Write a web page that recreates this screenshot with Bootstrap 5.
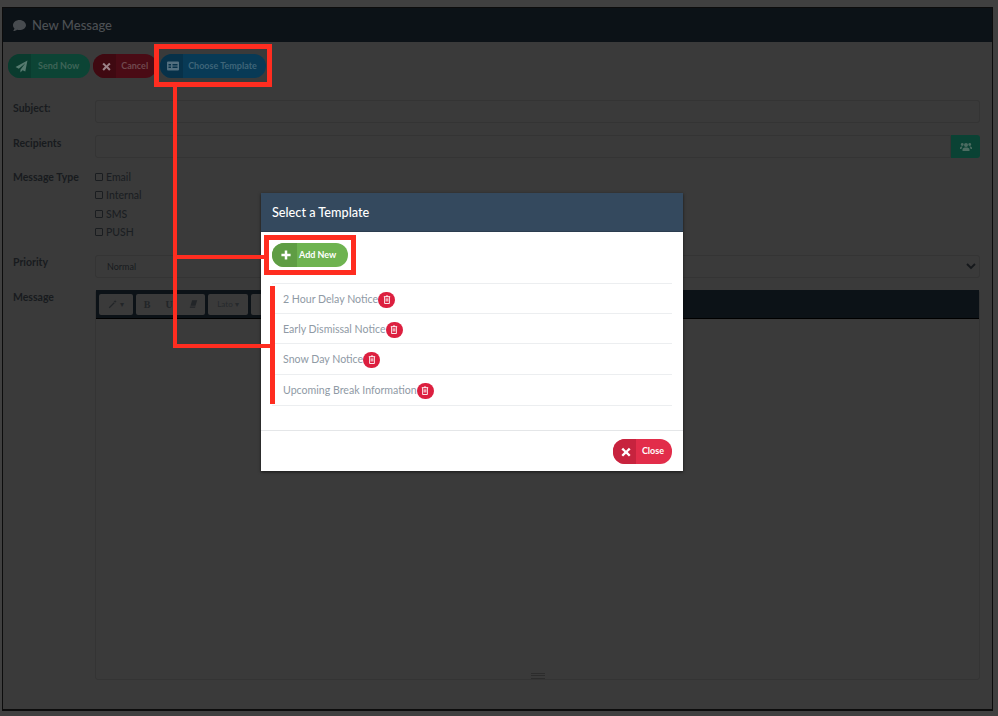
<!DOCTYPE html>
<html lang="en">
<head>
<meta charset="utf-8">
<title>New Message</title>
<link href="https://cdn.jsdelivr.net/npm/bootstrap@5.3.0/dist/css/bootstrap.min.css" rel="stylesheet">
<style>
html,body{height:716px;overflow:hidden}
body{background:#404040;font-family:Lato,"Liberation Sans",sans-serif;color:#1d2125;position:relative;font-size:11px}
.shell{margin:7px 5px 5px 2px;height:704px;background:#3a3a3a;border:1px solid #0c0c0c;border-width:1px 1px 2px 1px;display:flex;flex-direction:column}
.shell-head{height:34px;background:#0c1217;color:#4c5054;font-size:13px;font-weight:500;padding:1px 0 0 10px;gap:6px;flex:none}
.shell-head svg{width:13px;height:13px;fill:#474b4f}
.shell-body{padding:12px 12px 0 5px;flex:1;display:flex;flex-direction:column;min-height:0}
.lbtn{display:inline-flex;align-items:stretch;height:24px;border-radius:12px;overflow:hidden;font-size:9px;font-weight:700;line-height:24px}
.lbtn .ic{width:23px;display:flex;align-items:center;justify-content:center;padding-left:3px}
.lbtn .tx{padding:0 9px 0 5px}
.lbtn svg{width:9px;height:9px;fill:currentColor}
.b-send{background:#0c4435;color:#3f6458}.b-send .ic{background:#0a3b2e;color:#557a6f}
.b-send .ic svg{width:13px;height:13px}
.b-send .tx{padding:0 11px 0 7px}
.b-cancel{background:#4a0b15;color:#70494f}.b-cancel .ic{background:#3f0911;color:#9c8288}
.b-cancel .tx{padding:0 9px 0 5px}
.b-choose{background:#083a56;color:#3f6579}.b-choose .ic{background:#073149;color:#536f7f}
.toprow{gap:3px;margin-bottom:22px}
.frow{display:flex;align-items:flex-start;padding-left:5px}
.flabel{width:82px;font-weight:700;font-size:10.5px;color:#181b1e;flex:none;line-height:14px}
.fbox{height:23px;flex:1;border:1px solid #343434;background:#3a3a3a;border-radius:3px}
.r1{margin-bottom:12px}
.recip{flex:1;display:flex;height:23px}
.recip .fbox{border-radius:3px 0 0 3px}
.gbtn{width:29px;background:#0a4234;color:#4c6c61;display:flex;align-items:center;justify-content:center;border-radius:0 3px 3px 0}
.gbtn svg{width:12px;height:10px;fill:currentColor}
.checks{line-height:18.3px;font-size:10.5px;color:#1a1e22;font-weight:500;margin-bottom:14px}
.checks div{display:flex;align-items:center;gap:3px}
.cb{width:8px;height:8px;border:1px solid #1a1d20;border-radius:1px;display:inline-block}
.selbox{position:relative;padding-left:11px;line-height:21px;font-size:9px;color:#181b1e}
.selbox svg{position:absolute;right:3px;top:7px;width:10px;height:7px}
.editor{flex:1;height:390px;border:1px solid #343434;border-radius:3px;position:relative}
.etools{height:29px;margin-top:-1px;background:#0c1217;border-bottom:1px solid #000;display:flex;align-items:center;gap:3px;padding:0 3px}
.tb{height:21px;background:#3a3a3a;border-radius:2px;display:flex;align-items:center;justify-content:center;color:#222528;font-size:8px}
.tb svg{width:10px;height:10px;fill:currentColor}
.tb span{width:22px;text-align:center;font-weight:700;font-family:"Liberation Serif",serif;font-size:10px}
.tb .er{width:25px;display:flex;justify-content:center}
.grip{position:absolute;left:435px;bottom:0;width:14px;height:6px;border-top:1px solid #2c2c2c;border-bottom:1px solid #2c2c2c}
.grip::after{content:"";display:block;border-top:1px solid #2c2c2c;margin-top:1px}
.dlg{position:absolute;left:261px;top:193px;width:422px;height:278px;background:#fff;border:0;border-radius:0;overflow:hidden;box-shadow:0 1px 3px rgba(0,0,0,.6)}
.dlg-head{background:#34495e;color:#fff;height:39px;padding:1px 11px 0;font-size:12.700px;font-weight:500;border:0;border-radius:0;border-bottom:1px solid #2b3d4f;justify-content:flex-start}
.dlg-body{padding:11px 11px 0;height:198px;flex:none}
.b-add{background:#6eb350;color:#fff}.b-add .ic{background:#5f9d44;width:25px}
.b-add .ic svg,.b-close .ic svg{width:10px;height:10px}
.b-add .tx{padding:0 12px 0 2px}
.tlist{margin-top:16px;border-top:1px solid #eceef0;border-bottom:1px solid #eceef0}
.tlist .list-group-item{padding:2px 0 0 11px;height:30.200px;display:flex;align-items:center;font-size:10.600px;color:#8f9aa5;border-color:#eceef0;background:transparent}
.trash{width:17px;height:16px;border-radius:8px;background:#dc1f3f;color:#fff;display:inline-flex;align-items:center;justify-content:center}
.trash svg{width:8px;height:9px;fill:none;stroke:#fff;stroke-width:1.100}
.dlg-foot{height:41px;border-top:1px solid #e4e6e8;padding:8px 11px;justify-content:flex-end;display:flex;align-items:flex-start}
.b-close{background:#e22d4a;color:#fff;height:25px;line-height:24px}.b-close .ic{background:#c7233e;width:23px}
.b-close .tx{padding:0 8px 0 6px}
.mk{position:absolute;background:#ff2d20}
.mkbox{position:absolute;border:5px solid #ff2d20;background:transparent}
</style>
</head>
<body>
<div class="shell">
  <div class="shell-head d-flex align-items-center">
    <svg viewBox="0 0 24 24"><path d="M12 2C5.400 2 0 6.200 0 11.500c0 2.300 1 4.400 2.700 6C2.100 19.500.8 21 .4 22c4 0 5.900-1.300 7-2.300 1.400.5 3 .8 4.600.8 6.600 0 12-4.200 12-9S18.600 2 12 2z"/></svg>
    <span>New Message</span>
  </div>
  <div class="shell-body">
    <div class="d-flex toprow">
      <div class="lbtn b-send"><span class="ic"><svg viewBox="0 0 24 24"><path d="M23 1 1 13l6 3L19 6 10 18v5l4-4 5 2z"/></svg></span><span class="tx">Send Now</span></div>
      <div class="lbtn b-cancel"><span class="ic"><svg viewBox="0 0 24 24"><path d="M5 2 12 9l7-7 4 4-7 6 7 7-4 4-7-7-7 7-4-4 7-7-7-6z"/></svg></span><span class="tx">Cancel</span></div>
      <div class="lbtn b-choose"><span class="ic"><svg viewBox="0 0 24 24" style="width:14px;height:12px"><path d="M2 3h20a2 2 0 0 1 2 2v14a2 2 0 0 1-2 2H2a2 2 0 0 1-2-2V5a2 2 0 0 1 2-2zm1 5v3h5V8zm8 0v3h10V8zM3 13v3h5v-3zm8 0v3h10v-3z" fill-rule="evenodd"/></svg></span><span class="tx">Choose Template</span></div>
    </div>
    <div class="frow r1"><div class="flabel" style="padding-top:1px">Subject:</div><div class="fbox"></div></div>
    <div class="frow" style="margin-bottom:10px"><div class="flabel" style="padding-top:1px">Recipients</div><div class="recip"><div class="fbox"></div><div class="gbtn"><svg viewBox="0 0 24 20"><circle cx="12" cy="6" r="4"/><circle cx="4.500" cy="5" r="2.800"/><circle cx="19.500" cy="5" r="2.800"/><path d="M5 18v-3c0-3 3-4 7-4s7 1 7 4v3zM0 14v-2c0-2 2-3 4-3l1 .5C3.500 11 3 12.500 3 14zM24 14v-2c0-2-2-3-4-3l-1 .5c1.500 1.500 2 3 2 4.500z"/></svg></div></div></div>
    <div class="frow"><div class="flabel" style="padding-top:2px">Message Type</div>
      <div class="checks">
        <div><i class="cb"></i>Email</div><div><i class="cb"></i>Internal</div><div><i class="cb"></i>SMS</div><div><i class="cb"></i>PUSH</div>
      </div>
    </div>
    <div class="frow r1"><div class="flabel">Priority</div><div class="fbox selbox">Normal<svg viewBox="0 0 10 7"><path d="M1 1l4 4 4-4" fill="none" stroke="#15181b" stroke-width="1.800"/></svg></div></div>
    <div class="frow" style="flex:1"><div class="flabel">Message</div>
      <div class="editor">
        <div class="etools">
          <div class="tb" style="width:34px"><svg viewBox="0 0 24 24"><path d="M2 20 14 8l2 2L4 22zM17 2l1 3 3 1-3 1-1 3-1-3-3-1 3-1z"/></svg>&nbsp;▾</div>
          <div class="tb" style="width:69px"><span>B</span><span>U</span><i class="er"><svg viewBox="0 0 24 24"><path d="M10 3h12l-4 13H6z"/><path d="M5 18h13l-1 3H4z"/></svg></i></div>
          <div class="tb" style="width:40px;font-family:Lato,sans-serif;color:#26292c">Lato ▾</div>
          <div class="tb" style="width:40px"></div>
        </div>
        <div class="grip"></div>
      </div>
    </div>
  </div>
</div>

<div class="modal-content dlg">
  <div class="modal-header dlg-head">Select a Template</div>
  <div class="modal-body dlg-body">
    <div class="lbtn b-add"><span class="ic"><svg viewBox="0 0 24 24"><path d="M9 1h6v8h8v6h-8v8H9v-8H1V9h8z"/></svg></span><span class="tx">Add New</span></div>
    <ul class="list-group list-group-flush tlist">
      <li class="list-group-item">2 Hour Delay Notice<span class="trash"><svg viewBox="0 0 10 11"><path d="M1 2h8M2 2v8.500h6V2M4 2V1h2v1M4 4v4M6 4v4"/></svg></span></li>
      <li class="list-group-item">Early Dismissal Notice<span class="trash"><svg viewBox="0 0 10 11"><path d="M1 2h8M2 2v8.500h6V2M4 2V1h2v1M4 4v4M6 4v4"/></svg></span></li>
      <li class="list-group-item">Snow Day Notice<span class="trash"><svg viewBox="0 0 10 11"><path d="M1 2h8M2 2v8.500h6V2M4 2V1h2v1M4 4v4M6 4v4"/></svg></span></li>
      <li class="list-group-item">Upcoming Break Information<span class="trash"><svg viewBox="0 0 10 11"><path d="M1 2h8M2 2v8.500h6V2M4 2V1h2v1M4 4v4M6 4v4"/></svg></span></li>
    </ul>
  </div>
  <div class="dlg-foot">
    <div class="lbtn b-close"><span class="ic"><svg viewBox="0 0 24 24"><path d="M5 2 12 9l7-7 4 4-7 6 7 7-4 4-7-7-7 7-4-4 7-7-7-6z"/></svg></span><span class="tx">Close</span></div>
  </div>
</div>

<div class="mkbox" style="left:154px;top:44px;width:118px;height:43px"></div>
<div class="mk" style="left:173px;top:87px;width:4px;height:260px"></div>
<div class="mk" style="left:173px;top:255px;width:92px;height:4px"></div>
<div class="mk" style="left:173px;top:344px;width:98px;height:4px"></div>
<div class="mkbox" style="left:264px;top:235px;width:92px;height:40px"></div>
<div class="mk" style="left:270px;top:286px;width:5px;height:118px"></div>
</body>
</html>
